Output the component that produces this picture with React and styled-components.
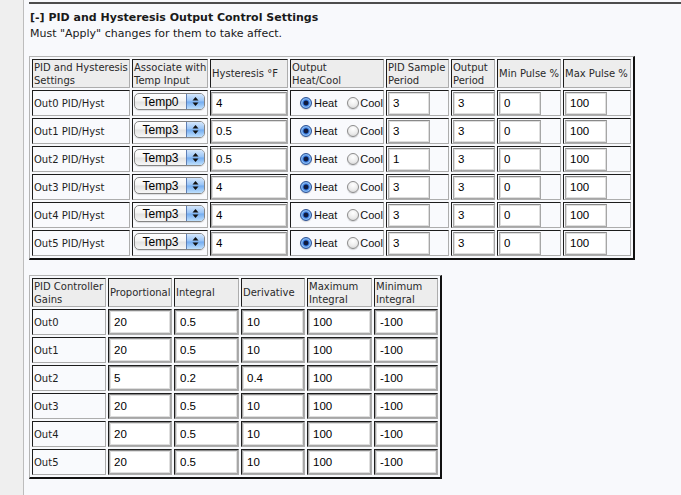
import React from "react";
import styled, { createGlobalStyle } from "styled-components";

const GlobalStyle = createGlobalStyle`
  html, body {
    margin: 0;
    padding: 0;
    background: #f8f9fc;
  }
  body {
    font-family: "DejaVu Sans", Verdana, sans-serif;
    color: #1e1e1e;
  }
`;

const Page = styled.div`
  display: flex;
  min-height: 495px;
`;

const Sidebar = styled.div`
  flex: none;
  width: 23px;
  background: #efefef;
  border-right: 1px solid #bdbdbd;
`;

const Main = styled.div`
  flex: 1;
  min-width: 0;
  padding: 2px 0 0 5px;
`;

const Rule = styled.div`
  height: 2px;
  background: #4d4d4d;
`;

const Title = styled.h2`
  margin: 7px 0 0 1px;
  font-size: 11px;
  line-height: 14px;
  font-weight: bold;
  color: #1a1a1a;
`;

const Note = styled.p`
  margin: 2px 0 0 1px;
  font-size: 11px;
  line-height: 13px;
  color: #1a1a1a;
`;

const Grid = styled.table`
  table-layout: fixed;
  width: ${p => p.$width}px;
  margin-top: ${p => p.$gap}px;
  border-collapse: separate;
  border-spacing: 2px;
  border-style: solid;
  border-width: 1px 2px 2px 1px;
  border-color: #b4b4b4 #111 #111 #b4b4b4;
`;

const Cell = styled.td`
  box-sizing: border-box;
  height: 26px;
  padding: 0 ${p => (p.$pad === undefined ? 1 : p.$pad)}px;
  padding-top: ${p => p.$top || 0}px;
  border: 1px solid;
  border-color: #1c1c1c #adadad #adadad #1c1c1c;
  background: #f9fafd;
  font-size: 10px;
  line-height: 13px;
  white-space: nowrap;
  vertical-align: ${p => (p.$top ? "top" : "middle")};
  overflow: visible;
`;

const Head = styled(Cell).attrs({ as: "th" })`
  height: 29px;
  width: ${p => p.$w}px;
  background: #ededed;
  text-align: left;
  font-weight: normal;
  color: #2a2a2a;
`;

const Field = styled.input`
  display: block;
  box-sizing: border-box;
  width: ${p => (p.$w ? `${p.$w}px` : "100%")};
  height: ${p => p.$h || 23}px;
  margin: 0 0 0 ${p => p.$ml || 0}px;
  padding: 0 0 0 4px;
  border: 1px solid #a6a6a6;
  border-top-color: #8a8a8a;
  box-shadow: inset 0 0 0 1px #dedede;
  background: #fff;
  font-family: "Liberation Sans", Arial, sans-serif;
  font-size: 11.5px;
  color: #000;
  outline: none;
`;

const Select = styled.div`
  display: flex;
  align-items: stretch;
  box-sizing: border-box;
  width: 71px;
  height: 17px;
  margin-left: 1px;
  border: 1px solid #858585;
  border-radius: 5px;
  overflow: hidden;
  background: linear-gradient(#ffffff, #f3f3f3 48%, #e2e2e2 52%, #f7f7f7);
  box-shadow: 0 1px 1px rgba(0, 0, 0, 0.12);
`;

const SelectText = styled.span`
  flex: 1;
  display: flex;
  align-items: center;
  justify-content: center;
  font-family: "Liberation Sans", Arial, sans-serif;
  font-size: 12px;
  line-height: 1;
  color: #000;
`;

const SelectArrows = styled.span`
  flex: none;
  width: 17px;
  border-left: 1px solid #5f7fb5;
  background: linear-gradient(#d5e7fc, #97c3f6 48%, #72abf0 52%, #bfe0fd);
  display: flex;
  align-items: center;
  justify-content: center;
`;

const Choice = styled.div`
  display: flex;
  align-items: center;
  font-family: "Liberation Sans", Arial, sans-serif;
  font-size: 11px;
  color: #111;
`;

const Radio = styled.span`
  flex: none;
  box-sizing: border-box;
  width: 12px;
  height: 12px;
  margin-left: ${p => p.$ml}px;
  border-radius: 50%;
  border: 1px solid ${p => (p.$on ? "#2b4f92" : "#8c8c8c")};
  background: ${p =>
    p.$on
      ? "radial-gradient(circle at 50% 50%, #101b3e 0 2px, #2f6fd6 2.8px, #8fc1f6 4.2px, #4f8fe4 6px)"
      : "radial-gradient(circle at 50% 30%, #ffffff, #ececec 55%, #cdcdcd)"};
  box-shadow: 0 1px 1px rgba(0, 0, 0, 0.15);
`;

const RadioText = styled.span`
  margin-left: ${p => p.$ml}px;
`;

const outputs = [
  { name: "Out0", temp: "Temp0", hyst: "4", sample: "3" },
  { name: "Out1", temp: "Temp3", hyst: "0.5", sample: "3" },
  { name: "Out2", temp: "Temp3", hyst: "0.5", sample: "1" },
  { name: "Out3", temp: "Temp3", hyst: "4", sample: "3" },
  { name: "Out4", temp: "Temp3", hyst: "4", sample: "3" },
  { name: "Out5", temp: "Temp3", hyst: "4", sample: "3" },
];

const gains = [
  ["20", "0.5", "10", "100", "-100"],
  ["20", "0.5", "10", "100", "-100"],
  ["5", "0.2", "0.4", "100", "-100"],
  ["20", "0.5", "10", "100", "-100"],
  ["20", "0.5", "10", "100", "-100"],
  ["20", "0.5", "10", "100", "-100"],
];

const hystHeads = [
  { w: 98, label: ["PID and Hysteresis", "Settings"] },
  { w: 76, label: ["Associate with", "Temp Input"] },
  { w: 78, label: ["Hysteresis °F"] },
  { w: 94, label: ["Output", "Heat/Cool"] },
  { w: 63, label: ["PID Sample", "Period"] },
  { w: 44, label: ["Output", "Period"] },
  { w: 64, label: ["Min Pulse %"] },
  { w: 68, label: ["Max Pulse %"] },
];

const gainHeads = [
  { w: 74, label: ["PID Controller", "Gains"] },
  { w: 64, label: ["Proportional"] },
  { w: 65, label: ["Integral"] },
  { w: 64, label: ["Derivative"] },
  { w: 65, label: ["Maximum", "Integral"] },
  { w: 64, label: ["Minimum", "Integral"] },
];

const HeadRow = ({ heads }) => (
  <tr>
    {heads.map(h => (
      <Head key={h.label[0]} $w={h.w}>
        {h.label.map((l, i) => (
          <React.Fragment key={l}>
            {i > 0 && <br />}
            {l}
          </React.Fragment>
        ))}
      </Head>
    ))}
  </tr>
);

const TempSelect = ({ value }) => (
  <Select>
    <SelectText>{value}</SelectText>
    <SelectArrows>
      <svg width="7" height="11" viewBox="0 0 7 11">
        <path d="M0.5 4.5 L3.5 1 L6.5 4.5 Z" fill="#111" />
        <path d="M0.5 6.5 L3.5 10 L6.5 6.5 Z" fill="#111" />
      </svg>
    </SelectArrows>
  </Select>
);

export default function App() {
  return (
    <>
      <GlobalStyle />
      <Page>
        <Sidebar />
        <Main>
          <Rule />
          <Title>[-] PID and Hysteresis Output Control Settings</Title>
          <Note>Must "Apply" changes for them to take affect.</Note>

          <Grid $width={606} $gap={16}>
            <tbody>
              <HeadRow heads={hystHeads} />
              {outputs.map(o => (
                <tr key={o.name}>
                  <Cell>{o.name} PID/Hyst</Cell>
                  <Cell $top={2} $pad={0}>
                    <TempSelect value={o.temp} />
                  </Cell>
                  <Cell $pad={0}>
                    <Field defaultValue={o.hyst} />
                  </Cell>
                  <Cell>
                    <Choice>
                      <Radio $on $ml={8} />
                      <RadioText $ml={2}>Heat</RadioText>
                      <Radio $ml={10} />
                      <RadioText $ml={1}>Cool</RadioText>
                    </Choice>
                  </Cell>
                  <Cell $pad={0}>
                    <Field $w={42} $ml={1} defaultValue={o.sample} />
                  </Cell>
                  <Cell $pad={0}>
                    <Field $w={42} $ml={1} defaultValue="3" />
                  </Cell>
                  <Cell $pad={0}>
                    <Field $w={42} $ml={1} defaultValue="0" />
                  </Cell>
                  <Cell $pad={0}>
                    <Field $w={42} $ml={1} defaultValue="100" />
                  </Cell>
                </tr>
              ))}
            </tbody>
          </Grid>

          <Grid $width={413} $gap={15}>
            <tbody>
              <HeadRow heads={gainHeads} />
              {gains.map((row, i) => (
                <tr key={i}>
                  <Cell>Out{i}</Cell>
                  {row.map((v, j) => (
                    <Cell key={j} $pad={0}>
                      <Field $h={24} defaultValue={v} />
                    </Cell>
                  ))}
                </tr>
              ))}
            </tbody>
          </Grid>
        </Main>
      </Page>
    </>
  );
}
